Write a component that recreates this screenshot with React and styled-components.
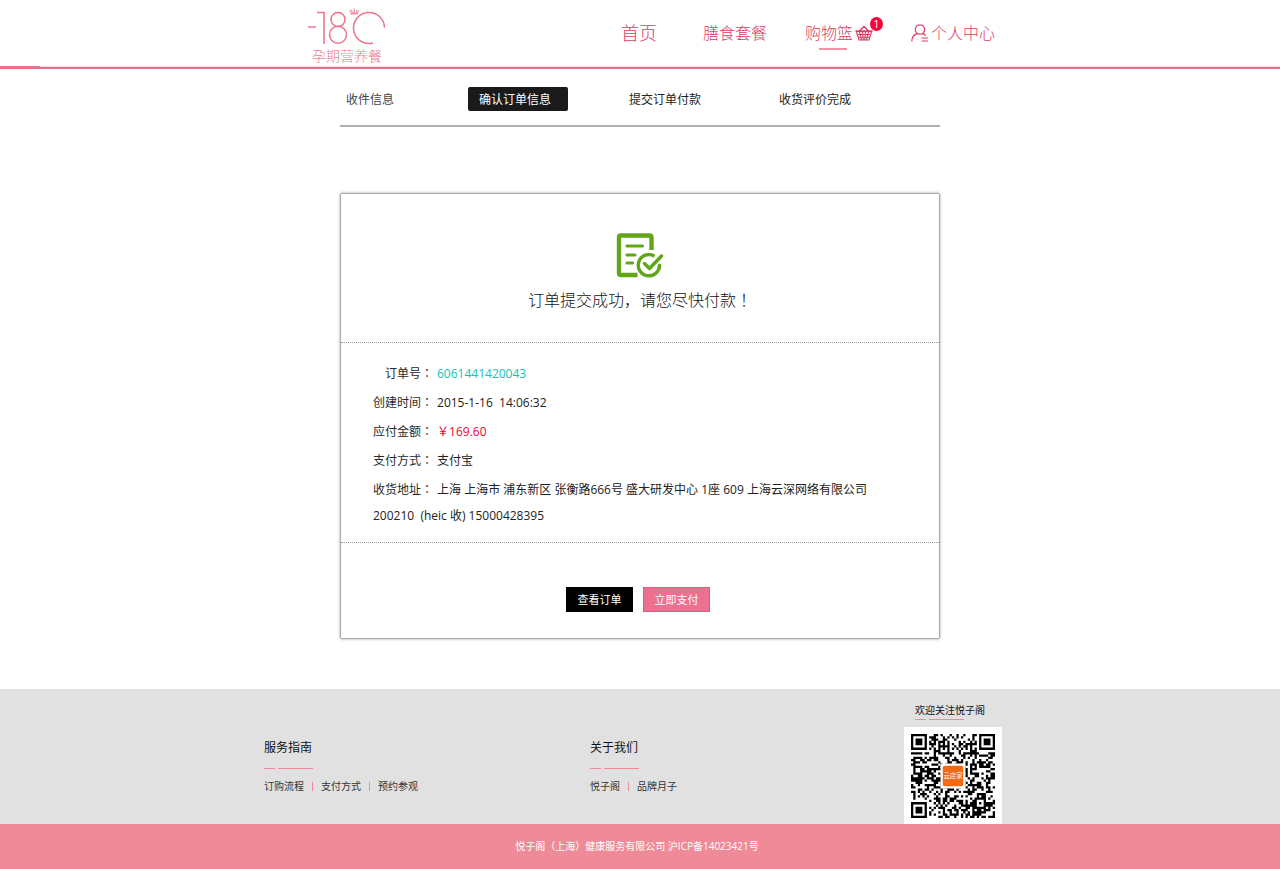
import styled, { createGlobalStyle, css } from "styled-components"


const GlobalStyle = createGlobalStyle`
    * {
        box-sizing:border-box;
    }
    body {
        margin:0;
        background-color:#fff;
        color:#2a2a2a;
        font-family:"Open Sans", "Noto Sans CJK SC", sans-serif;
        font-size:12px;
    }
    a {
        color:inherit;
        text-decoration:none;
    }
    h1, h2, p, ul, dl, dd {
        margin:0;
        padding:0;
    }
`

const steps = ["收件信息", "确认订单信息", "提交订单付款", "收货评价完成"]
const activeStep = 1

const footerColumns = [
    { title: "服务指南", links: ["订购流程", "支付方式", "预约参观"] },
    { title: "关于我们", links: ["悦子阁", "品牌月子"] },
]

const QR_SIZE = 37

// builds the path of all dark modules: three finder marks, the timing rows and the data area
const buildQrPath = () => {
    const finders = [[0, 0], [QR_SIZE - 7, 0], [0, QR_SIZE - 7]]
    let seed = 1423
    let path = ""

    const isDark = (x, y) => {
        seed = (seed * 1103515245 + 12345) % 2147483648
        const random = seed / 2147483648
        for (const [fx, fy] of finders) {
            const dx = x - fx
            const dy = y - fy
            if (dx >= -1 && dx <= 7 && dy >= -1 && dy <= 7) {
                const ring = Math.max(Math.abs(dx - 3), Math.abs(dy - 3))
                return ring === 3 || ring <= 1
            }
        }
        const align = Math.max(Math.abs(x - 30), Math.abs(y - 30))
        if (align <= 2) return align !== 1
        if (x === 6 || y === 6) return (x + y) % 2 === 0
        return random > 0.48
    }

    for (let y = 0; y < QR_SIZE; y++) {
        for (let x = 0; x < QR_SIZE; x++) {
            if (isDark(x, y)) path += `M${x} ${y}h1v1h-1z`
        }
    }
    return path
}

const qrPath = buildQrPath()


const LogoMark = () => (
    <svg width="80" height="38" viewBox="0 0 80 38" fill="none" stroke="#ec7389" strokeWidth="1.5" aria-hidden="true">
        <line x1="1" y1="19" x2="9" y2="19" />
        <polyline points="10,4.500 17,4.500 17,36" />
        <circle cx="31" cy="11.500" r="7" />
        <circle cx="31" cy="26.800" r="8.500" />
        <path d="M77.500 19.500A15.500 15.500 0 1 0 66 35" />
        <path d="M43.500 5.800h7.500" strokeWidth="1.200" />
        <path d="M47.200 0.500v5M44.500 5.200C42 3.500 43 1.800 44.300 2.300c1 .400 1 2 .700 3M50 5.200C52.500 3.500 51.500 1.800 50.200 2.300c-1 .400-1 2-.700 3" strokeWidth="1" />
    </svg>
)

const BasketIcon = () => (
    <svg width="18" height="16" viewBox="0 0 18 16" fill="none" stroke="#dc3c67" strokeWidth="1.100" aria-hidden="true">
        <path d="M4 6.500L9 1.500l5 5" strokeWidth="1.500" />
        <path d="M0.500 6.200h17" strokeWidth="1.800" />
        <path d="M1.500 7l2.500 8h10l2.500-8" />
        <path d="M2.500 9.500h13M3.300 12.200h11.400" />
        <path d="M4.500 7l2 8M7.500 7l.800 8M10.500 7l-.800 8M13.500 7l-2 8" />
    </svg>
)

const UserIcon = () => (
    <svg width="18" height="18" viewBox="0 0 18 18" fill="none" stroke="#dc3c67" strokeWidth="1.200" aria-hidden="true">
        <circle cx="9" cy="5.500" r="4.700" />
        <path d="M6.500 9.700C3 10.500.800 13.500.800 17.500M11.500 9.700c1.500.300 2.500 1 3.300 2" />
        <path d="M10.500 14h6.500M10.500 17h6.500" />
    </svg>
)

const OrderDoneIcon = () => (
    <svg width="48" height="45" viewBox="0 0 48 45" fill="none" stroke="#62a517" aria-hidden="true">
        <path d="M35.500 17V4.500Q35.500 2.500 33.500 2.500H5Q3 2.500 3 4.500V40Q3 42 5 42H21.500" strokeWidth="4.400" />
        <path d="M11 13h15.500M11 22h8M11 30h5.500" strokeWidth="3.200" strokeLinecap="round" />
        <path d="M38.500 23.200A10.600 10.600 0 1 0 43.400 31" strokeWidth="3.400" />
        <path d="M28.500 30.500l5 5L45.500 23" strokeWidth="3.400" strokeLinecap="round" strokeLinejoin="round" />
    </svg>
)

const QrCode = () => (
    <svg width="84" height="84" viewBox="0 0 37 37" role="img" aria-label="欢迎关注悦子阁">
        <path d={qrPath} fill="#000" />
        <rect x="13" y="13" width="11" height="11" rx="1" fill="#fff" />
        <rect x="14" y="14" width="9" height="9" rx="0.800" fill="#f26a14" />
        <text x="18.500" y="19.300" fontSize="2.800" fill="#fff" textAnchor="middle">云店家</text>
    </svg>
)


const App = () => {
    return (
        <>
            <GlobalStyle />
            <Header>
                <HeaderInner>
                    <Logo href="#">
                        <LogoMark />
                        <LogoText>孕期营养餐</LogoText>
                    </Logo>
                    <Nav>
                        <NavLink href="#" $large>首页</NavLink>
                        <NavLink href="#">膳食套餐</NavLink>
                        <NavLink href="#" $active>
                            购物篮
                            <BasketIcon />
                            <Badge>1</Badge>
                        </NavLink>
                        <NavLink href="#">
                            <UserIcon />
                            个人中心
                        </NavLink>
                    </Nav>
                </HeaderInner>
                <HeaderLine />
            </Header>

            <Main>
                <Steps>
                    {
                        steps.map((step, index) => (
                            <Step key={step} $active={index === activeStep}>{step}</Step>
                        ))
                    }
                </Steps>

                <Card>
                    <CardHead>
                        <OrderDoneIcon />
                        <Message>订单提交成功，请您尽快付款<Mark>！</Mark></Message>
                    </CardHead>
                    <Details>
                        <DetailRow>
                            <Label>订单号<Mark>：</Mark></Label>
                            <Value $color="#14c4b4">6061441420043</Value>
                        </DetailRow>
                        <DetailRow>
                            <Label>创建时间<Mark>：</Mark></Label>
                            <Value>2015-1-16{"  "}14:06:32</Value>
                        </DetailRow>
                        <DetailRow>
                            <Label>应付金额<Mark>：</Mark></Label>
                            <Value $color="#f5002f"><Mark>￥</Mark>169.60</Value>
                        </DetailRow>
                        <DetailRow>
                            <Label>支付方式<Mark>：</Mark></Label>
                            <Value>支付宝</Value>
                        </DetailRow>
                        <DetailRow>
                            <Label>收货地址<Mark>：</Mark></Label>
                            <Value>上海 上海市 浦东新区 张衡路666号 盛大研发中心 1座 609 上海云深网络有限公司 200210{"  "}(heic 收) 15000428395</Value>
                        </DetailRow>
                    </Details>
                    <Actions>
                        <Button type="button">查看订单</Button>
                        <Button type="button" $primary>立即支付</Button>
                    </Actions>
                </Card>
            </Main>

            <Footer>
                <FooterInner>
                    {
                        footerColumns.map(column => (
                            <FooterColumn key={column.title}>
                                <FooterTitle>{column.title}</FooterTitle>
                                <Dashes />
                                <FooterLinks>
                                    {column.links.map(link => (
                                        <li key={link}><a href="#">{link}</a></li>
                                    ))}
                                </FooterLinks>
                            </FooterColumn>
                        ))
                    }
                    <Follow>
                        <FollowText>
                            欢迎关注悦子阁
                            <Dashes />
                        </FollowText>
                        <QrBox>
                            <QrCode />
                        </QrBox>
                    </Follow>
                </FooterInner>
                <Copyright>悦子阁（上海）健康服务有限公司 沪ICP备14023421号</Copyright>
            </Footer>
        </>
    )
}

export default App;

const Header = styled.header`
    background-color:#fff;
`

const HeaderInner = styled.div`
    max-width:720px;
    margin:0 auto;
    padding:8px 5px 0 27px;
    display:flex;
    justify-content:space-between;
    align-items:flex-start;
`

const HeaderLine = styled.div`
    height:3px;
    background:
        linear-gradient(#e5738a, #e5738a) left top / 40px 1px no-repeat,
        linear-gradient(#f8dbe1 1px, #e96f88 1px);
`

const Logo = styled.a`
    display:flex;
    flex-direction:column;
    align-items:center;
    color:#ee7f93;
`

const LogoText = styled.span`
    font-size:14px;
    font-weight:300;
    line-height:20px;
`

const Nav = styled.nav`
    display:flex;
    gap:38px;
    padding-top:10px;
`

const NavLink = styled.a`
    position:relative;
    display:flex;
    align-items:center;
    gap:2px;
    font-size:${props => props.$large ? "18px" : "16px"};
    padding-right:${props => props.$large ? "8px" : "0"};
    font-weight:300;
    line-height:30px;
    color:#dc3c67;

    ${props => props.$active && css`
        &::after {
            content:"";
            position:absolute;
            left:14px;
            bottom:-2px;
            width:28px;
            height:2px;
            background-color:#f193a7;
        }
    `}
`

const Badge = styled.span`
    position:absolute;
    top:-1px;
    right:-10px;
    width:13px;
    height:14px;
    border-radius:50%;
    background-color:#fb0038;
    color:#fff;
    font-size:11px;
    font-weight:400;
    line-height:14px;
    text-align:center;
`

const Main = styled.main`
    max-width:600px;
    margin:0 auto;
    padding:18px 0 50px;
`

const Steps = styled.ol`
    display:grid;
    grid-template-columns:128px 150px 150px 1fr;
    justify-items:start;
    margin:0 0 66px;
    padding:0 0 14px;
    border-bottom:2px solid #b0b0b0;
    list-style:none;
`

const Step = styled.li`
    padding:1px 11px 0;
    line-height:23px;
    color:#222;

    &:first-child {
        padding:1px 6px 0;
        color:#444;
    }

    ${props => props.$active && css`
        min-width:100px;
        border-radius:2px;
        background-color:#1a1a1a;
        color:#fff;
    `}
`

const Card = styled.section`
    border:1px solid #a6acac;
    border-radius:2px;
    box-shadow:0 0 3px rgba(0,0,0,0.35);
`

const CardHead = styled.div`
    display:flex;
    flex-direction:column;
    align-items:center;
    padding:39px 0 30px;
    border-bottom:1px dotted #999;
`

const Message = styled.h1`
    margin-top:9px;
    font-size:16px;
    font-weight:300;
    line-height:24px;
    color:#111;
`

// full-width punctuation that sits in the middle of its cell
const Mark = styled.span`
    font-family:"Noto Sans CJK JP", sans-serif;
`

const Details = styled.dl`
    display:flex;
    flex-direction:column;
    gap:2px;
    padding:17px 32px 13px;
    border-bottom:1px dotted #999;
    line-height:26px;
`

const DetailRow = styled.div`
    white-space:pre-wrap;
`

const Label = styled.dt`
    display:inline-block;
    min-width:64px;
    padding-right:4px;
    text-align:right;
    white-space:nowrap;
`

const Value = styled.dd`
    display:inline;
    color:${props => props.$color || "#222"};
`

const Actions = styled.div`
    display:flex;
    justify-content:center;
    gap:10px;
    padding:44px 4px 26px 0;
`

const Button = styled.button`
    min-width:67px;
    height:25px;
    padding:0 10px;
    border:1px solid ${props => props.$primary ? "#e2597c" : "#000"};
    background-color:${props => props.$primary ? "#ee7091" : "#000"};
    color:#fff;
    font-family:inherit;
    font-size:11px;
    line-height:22px;
    cursor:pointer;
`

const Footer = styled.footer`
    background-color:#e1e1e1;
`

const FooterInner = styled.div`
    display:grid;
    grid-template-columns:326px 1fr 98px;
    max-width:752px;
    margin:0 auto;
    padding-right:14px;
`

const FooterColumn = styled.div`
    padding-top:50px;
`

const FooterTitle = styled.h2`
    font-size:12px;
    font-weight:400;
    line-height:18px;
    color:#111;
`

const Dashes = styled.div`
    width:49px;
    height:1px;
    background:linear-gradient(90deg, #f08a9b 11px, transparent 11px, transparent 14px, #f08a9b 14px);

    ${FooterTitle} + & {
        margin:11px 0 9px;
    }
`

const FooterLinks = styled.ul`
    display:flex;
    list-style:none;
    font-size:10px;
    line-height:16px;
    color:#333;

    li {
        display:flex;
        align-items:center;
    }

    li + li::before {
        content:"";
        width:1px;
        height:9px;
        margin:0 8px;
        background-color:#f08a9b;
    }
`

const Follow = styled.div`
    display:flex;
    flex-direction:column;
    padding-top:12px;
`

const FollowText = styled.div`
    padding:0 0 7px 11px;
    font-size:10px;
    line-height:18px;
    color:#111;
`

const QrBox = styled.div`
    padding:7px 7px 6px;
    background-color:#fff;

    svg {
        display:block;
    }
`

const Copyright = styled.p`
    padding:0 6px 0 0;
    background-color:#ef8a99;
    color:#fff;
    font-size:10px;
    line-height:45px;
    text-align:center;
`
